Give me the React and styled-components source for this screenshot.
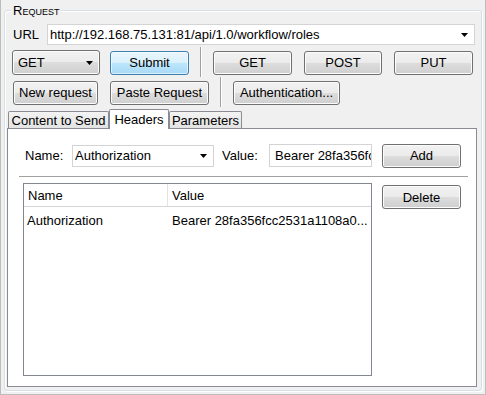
import React from 'react'
import styled, { createGlobalStyle } from 'styled-components'

const GlobalStyle = createGlobalStyle`
  html, body {
    margin: 0;
    padding: 0;
    background: #f0f0f0;
  }
  body {
    font-family: "Liberation Sans", Arial, sans-serif;
    font-size: 13px;
    color: #000;
  }
  * {
    box-sizing: border-box;
  }
`

const Window = styled.div`
  display: flex;
  flex-direction: column;
  width: 486px;
  height: 395px;
  padding: 10px 3px 3px 3px;

  border: 1px solid #bdbdbd;
  border-top: none;
  background: #f0f0f0;
`

const GroupBox = styled.div`
  position: relative;
  display: flex;
  flex-direction: column;
  flex: 1;
  padding: 13px 4px 3px 2px;

  border: 1px solid #d5dfe5;
  border-radius: 3px;
  box-shadow: inset 1px 1px 0 #fff, 1px 1px 0 #fff;
`

const GroupTitle = styled.span`
  position: absolute;
  top: -8px;
  left: 6px;
  padding: 0 2px;

  line-height: 15px;
  font-variant: small-caps;
  background: #f0f0f0;
`

const Row = styled.div`
  display: flex;
  align-items: center;
  flex: 0 0 ${p => p.$height}px;
  margin-top: ${p => p.$gap || 0}px;
  padding-left: 5px;
`

const Label = styled.span`
  flex: 0 0 ${p => p.$width}px;
  margin-left: ${p => p.$ml || 0}px;
  line-height: 15px;
`

const Button = styled.button`
  flex: 0 0 ${p => p.$width}px;
  height: ${p => p.$height || 24}px;
  margin-left: ${p => p.$ml || 0}px;
  margin-top: ${p => p.$mt || 0}px;
  padding: 0;

  font: inherit;
  color: #000;
  border: 1px solid ${p => (p.$primary ? '#3c7fb1' : '#707070')};
  border-radius: 3px;
  background: ${p => (p.$primary
    ? 'linear-gradient(#eaf6fd 0%, #d9f0fc 50%, #bee6fd 50%, #a7d9f5 100%)'
    : 'linear-gradient(#f2f2f2 0%, #ebebeb 50%, #dddddd 50%, #cfcfcf 100%)')};
  box-shadow: inset 0 0 0 1px ${p => (p.$primary ? 'rgba(255,255,255,0.6)' : '#fcfcfc')};
`

const Combo = styled.div`
  display: flex;
  align-items: center;
  flex: 0 0 ${p => p.$width}px;
  height: ${p => p.$height}px;
  padding: 0 6px 0 ${p => p.$pad || 2}px;

  border: 1px solid ${p => (p.$button ? '#707070' : '#d4d4d4')};
  border-radius: ${p => (p.$button ? 3 : 0)}px;
  background: ${p => (p.$button
    ? 'linear-gradient(#f2f2f2 0%, #ebebeb 50%, #dddddd 50%, #cfcfcf 100%)'
    : '#fff')};
  box-shadow: ${p => (p.$button ? 'inset 0 0 0 1px #fcfcfc' : 'none')};
`

const ComboText = styled.span`
  flex: 1;
  overflow: hidden;
  white-space: nowrap;
`

const VSep = styled.div`
  align-self: stretch;
  flex: 0 0 1px;
  margin: -3px 12px -2px 11px;
  background: #a0a0a0;
  box-shadow: 1px 0 0 #fff;
`

const TabStrip = styled.div`
  display: flex;
  align-items: flex-end;
  flex: 0 0 19px;
  margin-top: 4px;
  padding-left: 1px;
`

const Tab = styled.div`
  position: relative;
  z-index: ${p => (p.$active ? 2 : 1)};
  display: flex;
  align-items: center;
  justify-content: center;
  flex: 0 0 ${p => p.$width}px;
  height: ${p => (p.$active ? 20 : 17)}px;
  margin-bottom: ${p => (p.$active ? -1 : 0)}px;

  border: 1px solid #898c95;
  border-bottom: none;
  border-radius: 2px 2px 0 0;
  background: ${p => (p.$active ? '#fff' : 'linear-gradient(#f3f3f3, #e3e3e3)')};
  line-height: 15px;
`

const Panel = styled.div`
  display: flex;
  flex-direction: column;
  flex: 1;

  border: 1px solid #898c95;
  background: #fff;
`

const FormRow = styled.div`
  display: flex;
  align-items: center;
  flex: 0 0 25px;
  margin-top: 14px;
  padding-left: 17px;
`

const TextInput = styled.input`
  flex: 0 0 ${p => p.$width}px;
  width: ${p => p.$width}px;
  min-width: 0;
  height: 23px;
  margin: 0;
  padding: 0 0 0 5px;

  font: inherit;
  color: #000;
  border: 1px solid #d4d4d4;
  background: #fff;
  outline: none;
`

const HSep = styled.div`
  flex: 0 0 1px;
  margin: 8px 8px 0 11px;
  background: #a0a0a0;
  box-shadow: 0 1px 0 #fff;
`

const ListArea = styled.div`
  display: flex;
  align-items: flex-start;
  flex: 1;
  margin: 6px 0 10px 0;
  padding-left: 15px;
`

const ListView = styled.div`
  align-self: stretch;
  flex: 0 0 349px;

  border: 1px solid #828790;
  background: #fff;
`

const ListHeader = styled.div`
  display: flex;
  height: 23px;
  border-bottom: 1px solid #d5d5d5;
`

const ListRow = styled.div`
  display: flex;
  height: 17px;
  margin-top: 5px;
`

const Cell = styled.div`
  display: flex;
  align-items: center;
  flex: 0 0 ${p => p.$width}px;
  padding-left: ${p => p.$pad || 4}px;
  overflow: hidden;
  white-space: nowrap;
  border-right: ${p => (p.$divider ? '1px solid #e3e3e3' : 'none')};
`

const Arrow = () => (
  <svg width="7" height="4" viewBox="0 0 7 4">
    <polygon points="0,0 7,0 3.5,4" fill="#000" />
  </svg>
)

export default function App() {
  return (
    <Window>
      <GlobalStyle />
      <GroupBox>
        <GroupTitle>Request</GroupTitle>

        <Row $height={21}>
          <Label $width={34} $ml={1}>URL</Label>
          <Combo $width={428} $height={21}>
            <ComboText>http://192.168.75.131:81/api/1.0/workflow/roles</ComboText>
            <Arrow />
          </Combo>
        </Row>

        <Row $height={25} $gap={5}>
          <Combo $button $width={88} $height={25} $pad={5}>
            <ComboText>GET</ComboText>
            <Arrow />
          </Combo>
          <Button $primary $width={79} $ml={10}>Submit</Button>
          <VSep />
          <Button $width={79}>GET</Button>
          <Button $width={78} $ml={12}>POST</Button>
          <Button $width={79} $ml={12}>PUT</Button>
        </Row>

        <Row $height={25} $gap={5}>
          <Button $width={85} $ml={1}>New request</Button>
          <Button $width={99} $ml={12}>Paste Request</Button>
          <VSep />
          <Button $width={107}>Authentication...</Button>
        </Row>

        <TabStrip>
          <Tab $width={101}>Content to Send</Tab>
          <Tab $active $width={60}>Headers</Tab>
          <Tab $width={73}>Parameters</Tab>
        </TabStrip>

        <Panel>
          <FormRow>
            <Label $width={47}>Name:</Label>
            <Combo $width={142} $height={22} $pad={2}>
              <ComboText>Authorization</ComboText>
              <Arrow />
            </Combo>
            <Label $width={47} $ml={8}>Value:</Label>
            <TextInput $width={103} readOnly value="Bearer 28fa356fcc2531a1108a0b3c" />
            <Button $width={79} $ml={10}>Add</Button>
          </FormRow>

          <HSep />

          <ListArea>
            <ListView>
              <ListHeader>
                <Cell $width={144} $divider>Name</Cell>
                <Cell $width={203}>Value</Cell>
              </ListHeader>
              <ListRow>
                <Cell $width={144} $pad={3}>Authorization</Cell>
                <Cell $width={203}>Bearer 28fa356fcc2531a1108a0...</Cell>
              </ListRow>
            </ListView>
            <Button $width={79} $ml={10} $mt={2}>Delete</Button>
          </ListArea>
        </Panel>
      </GroupBox>
    </Window>
  )
}
